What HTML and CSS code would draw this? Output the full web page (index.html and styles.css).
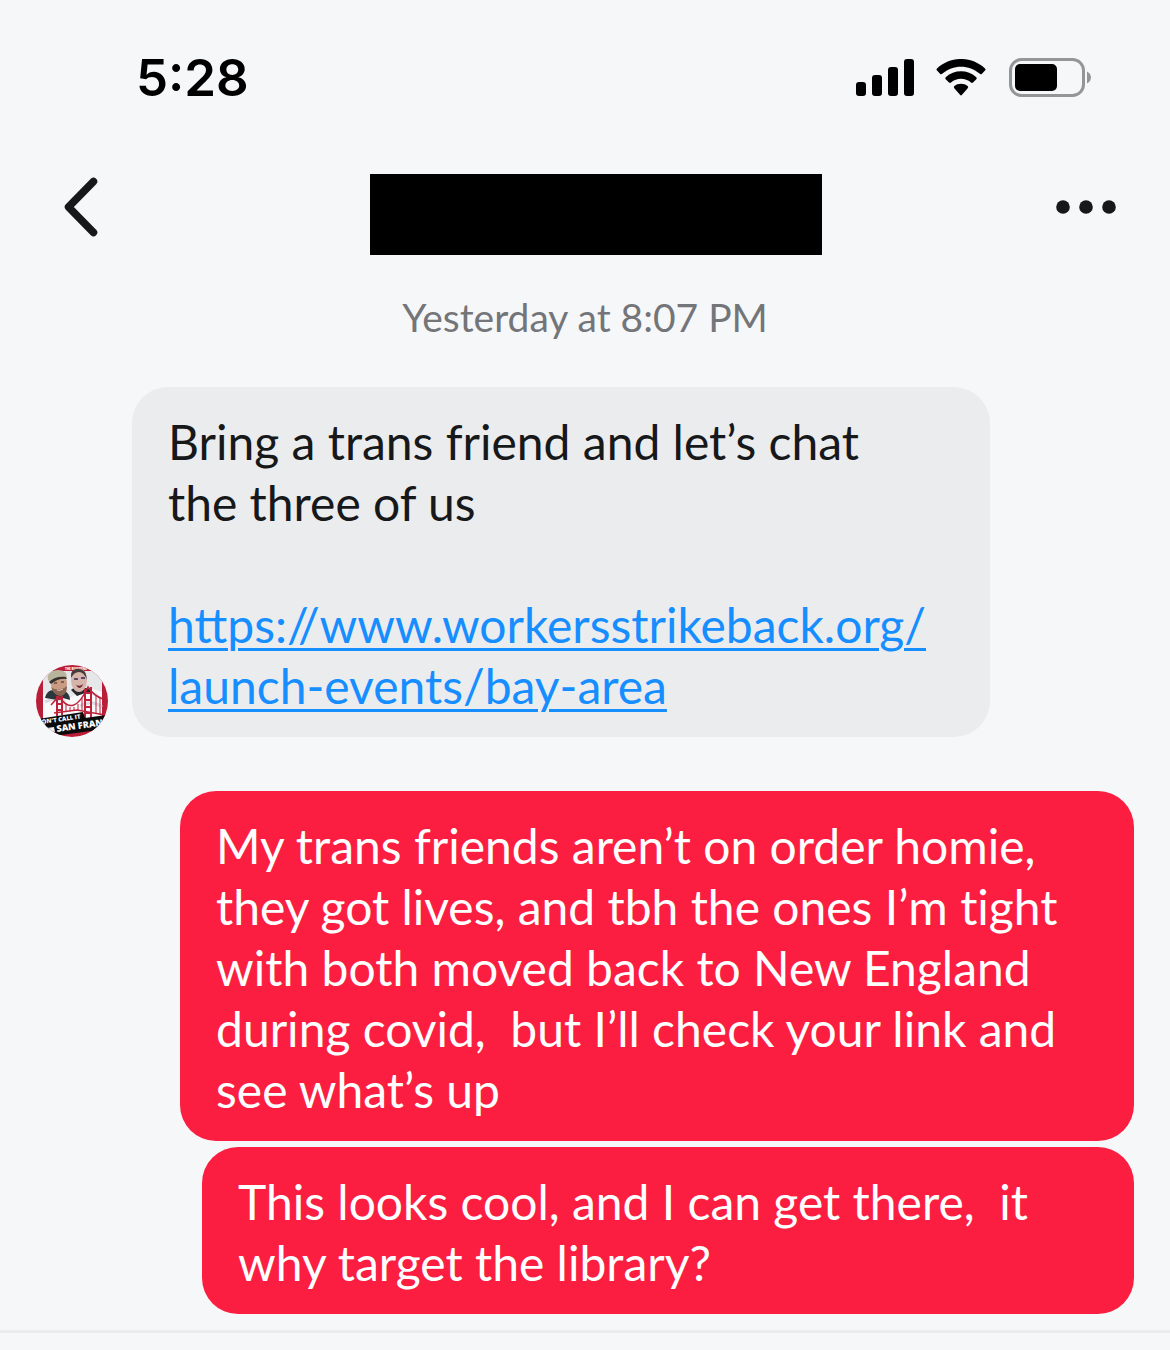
FILE: index.html
```html
<!DOCTYPE html>
<html lang="en">
<head>
    <meta charset="UTF-8">
    <meta name="viewport" content="width=device-width, initial-scale=1.0">
    <title>Messages</title>
    <link rel="stylesheet" href="styles.css">
</head>
<body>

    <div class="status-bar">
        <span class="time">5:28</span>
        <div class="status-icons">
            <svg width="58" height="38" viewBox="0 0 58 38">
                <rect x="0" y="23" width="10" height="14" rx="3"/>
                <rect x="16" y="16" width="10" height="21" rx="3"/>
                <rect x="32" y="8" width="10" height="29" rx="3"/>
                <rect x="48" y="0" width="10" height="37" rx="3"/>
            </svg>
            <svg width="50" height="38" viewBox="0 1 50 38">
                <path d="M1 10.5Q0 11.6 1 12.6L4.3 15.9Q5.2 16.6 6.2 15.8C17 6.3 33 6.3 43.8 15.8Q44.8 16.6 45.7 15.9L49 12.6Q50 11.6 49 10.5C35.5-2.2 14.5-2.2 1 10.5Z"/>
                <path d="M9.7 19.2Q8.7 20.2 9.7 21.2L13 24.5Q14 25.3 15 24.5C20.8 19.5 29.2 19.5 35 24.5Q36 25.3 37 24.5L40.3 21.2Q41.3 20.2 40.3 19.2C31.7 11.3 18.3 11.3 9.7 19.2Z"/>
                <path d="M18.4 28Q17.2 29 18.3 30.2L24 36.8Q25 38 26 36.8L31.7 30.2Q32.8 29 31.6 28C27.9 25 22.1 25 18.4 28Z"/>
            </svg>
            <svg width="84" height="40" viewBox="-1 0 84 40">
                <rect x="1.5" y="1.5" width="73" height="36" rx="11" fill="none" stroke="#949597" stroke-width="3"/>
                <rect x="6" y="6" width="42" height="27" rx="5"/>
                <path d="M78 13.5C83.3 16 83.3 23 78 25.5Z" fill="#949597"/>
            </svg>
        </div>
    </div>

    <header class="chat-header">
        <button type="button" class="back" aria-label="Back">
            <svg width="34" height="60" viewBox="0 0 34 60">
                <path d="M29.5 4.5L4.5 30L29.5 55.5" fill="none" stroke="#17181a" stroke-width="7.5" stroke-linecap="round" stroke-linejoin="round"/>
            </svg>
        </button>
        <div class="contact-name"></div>
        <button type="button" class="more" aria-label="More options">
            <svg width="60" height="14" viewBox="0 0 60 14">
                <circle cx="7" cy="7" r="6.8"/>
                <circle cx="30" cy="7" r="6.8"/>
                <circle cx="53" cy="7" r="6.8"/>
            </svg>
        </button>
    </header>

    <main class="messages">
        <p class="date">Yesterday at 8:07 PM</p>

        <div class="received">
            <svg class="avatar" width="72" height="72" viewBox="0 0 72 72">
                <clipPath id="round"><circle cx="36" cy="36" r="36"/></clipPath>
                <g clip-path="url(#round)">
                    <rect width="72" height="72" fill="#ba1d38"/>
                    <rect x="7" y="6" width="59" height="57" fill="#e6e7e8"/>
                    <path d="M7 30Q15 26 22 32T40 29T66 27V57H7Z" fill="#fafafa"/>
                    <path d="M9 37Q20 31 29 37M38 27Q52 22 64 33M44 41Q55 34 66 42" fill="none" stroke="#d8dadd" stroke-width="3"/>
                    <text x="29" y="5" class="avatar-tag">THE REVEREND</text>
                    <!-- left man with cap -->
                    <path d="M9 33Q11 24 19 25L27 25Q34 28 34 35L27 33L22 35Z" fill="#29363c"/>
                    <ellipse cx="23" cy="19" rx="8" ry="11" fill="#c99b83"/>
                    <path d="M15 22Q18 25 22 24Q27 25 31 21Q31 30 25 31Q18 31 15 22Z" fill="#8a6552"/>
                    <path d="M12 15Q10 9 17 6Q25 3 30 8L31 12Q22 11 15 18Z" fill="#b9b49c"/>
                    <path d="M13 17Q19 11 30 12L31 14Q22 13 15 19Z" fill="#34302d"/>
                    <path d="M18 18h3M25 17h3" stroke="#352720" stroke-width="1"/>
                    <path d="M21 25Q24 26 27 24" fill="none" stroke="#e3cfc4" stroke-width="1"/>
                    <!-- right man with face paint -->
                    <path d="M35 25Q39 21 43 24L50 23Q56 24 56 29L49 28L41 31Z" fill="#26282c"/>
                    <ellipse cx="43" cy="15" rx="8" ry="12" fill="#d5b5aa"/>
                    <path d="M35 13Q34 5 40 4Q50 2 51 15Q48 7 43 7Q38 7 35 13Z" fill="#493a3b"/>
                    <path d="M38 14h4M45 13h4" stroke="#59476b" stroke-width="2"/>
                    <path d="M40 20Q44 22 47 19Q46 23 43 23Q41 22 40 20Z" fill="#702c36"/>
                    <!-- bridge -->
                    <g fill="none" stroke="#bd233b">
                        <path d="M21 51V31M26 50V31M21 34h5M21 39h5M21 45h5M49 55V24M55 55V22M49 28h6M49 35h6M49 42h6M49 48h6" stroke-width="2"/>
                        <path d="M15 40L23 31Q37 54 52 22Q58 31 67 34M18 48L41 45L69 50" stroke-width="1.5"/>
                        <path d="M30 39V46M34 42V46M38 42V46M42 39V46M46 33V46M60 30V49M64 33V50" stroke-width="1"/>
                    </g>
                    <path d="M2 54L47 47L49 53L70 50L69 64L18 71L17 64L4 66Z" fill="#0b0b0c"/>
                    <text x="6" y="59" class="avatar-line" transform="rotate(-8 6 59)">ON'T CALL IT</text>
                    <text x="21" y="67" class="avatar-title" transform="rotate(-8 21 67)">SAN FRAN</text>
                    <path d="M11 63L18 62L19 67L12 66Z" fill="#eee"/>
                </g>
            </svg>
            <div class="bubble">
                Bring a trans friend and let’s chat<br>
                the three of us<br>
                <br>
                <a href="https://www.workersstrikeback.org/launch-events/bay-area">https://www.workersstrikeback.org/<br>launch-events/bay-area</a>
            </div>
        </div>

        <div class="sent">
            <div class="bubble">
                My trans friends aren’t on order homie,<br>
                they got lives, and tbh the ones I’m tight<br>
                with both moved back to New England<br>
                during covid,&nbsp; but I’ll check your link and<br>
                see what’s up
            </div>
            <div class="bubble short">
                This looks cool, and I can get there,&nbsp; it<br>
                why target the library?
            </div>
        </div>
    </main>

    <footer class="composer"></footer>

</body>
</html>
```

FILE: styles.css
```css
* {
    box-sizing: border-box;
}

body {
    font-family: Lato, sans-serif;
    background-color: #f6f7f9;
    color: #17181a;
    margin: 0;
    min-height: 100vh;
    display: flex;
    flex-direction: column;
}

svg {
    display: block;
}

button {
    background: none;
    border: none;
    padding: 0;
    cursor: pointer;
}

.status-bar {
    display: flex;
    justify-content: space-between;
    align-items: center;
    padding: 48px 78px 48px 136px;
    color: #000;
}

.time {
    font-family: Inter, sans-serif;
    font-size: 51px;
    font-weight: 600;
    line-height: 60px;
}

.status-icons {
    display: flex;
    align-items: center;
    gap: 22px;
}

.chat-header {
    display: flex;
    justify-content: space-between;
    align-items: center;
    padding: 18px 54px 0 64px;
}

.back, .more {
    margin-bottom: 16px;
}

.contact-name {
    width: 452px;
    height: 81px;
    margin-left: 38px;
    background-color: #000;
}

.more {
    fill: #17181a;
}

.messages {
    flex: 1;
    padding: 38px 36px 16px;
}

.date {
    margin: 0 0 46px;
    color: #737578;
    font-size: 39px;
    line-height: 48px;
    text-align: center;
}

.bubble {
    padding: 24px 36px 21px;
    border-radius: 36px;
    font-size: 48px;
    line-height: 61px;
}

.received {
    display: flex;
    align-items: flex-end;
    gap: 24px;
    margin: 0 144px 54px 0;
}

.received .bubble {
    flex: 1;
    background-color: #ebecee;
}

.received a {
    color: #168eff;
    text-decoration-thickness: 3px;
    text-underline-offset: 5px;
}

.avatar {
    flex-shrink: 0;
}

.avatar text {
    fill: #fff;
    font-family: "Open Sans", sans-serif;
    font-weight: 800;
}

.avatar .avatar-tag {
    font-size: 3px;
}

.avatar .avatar-line {
    font-size: 6px;
}

.avatar .avatar-title {
    font-size: 9px;
}

.sent {
    display: flex;
    flex-direction: column;
    gap: 6px;
    margin-left: 144px;
}

.sent .bubble {
    background-color: #fc1e41;
    color: #fff;
    font-variant-ligatures: none;
}

.sent .short {
    margin-left: 22px;
}

.composer {
    height: 20px;
    border-top: 3px solid #ebecee;
}
```
